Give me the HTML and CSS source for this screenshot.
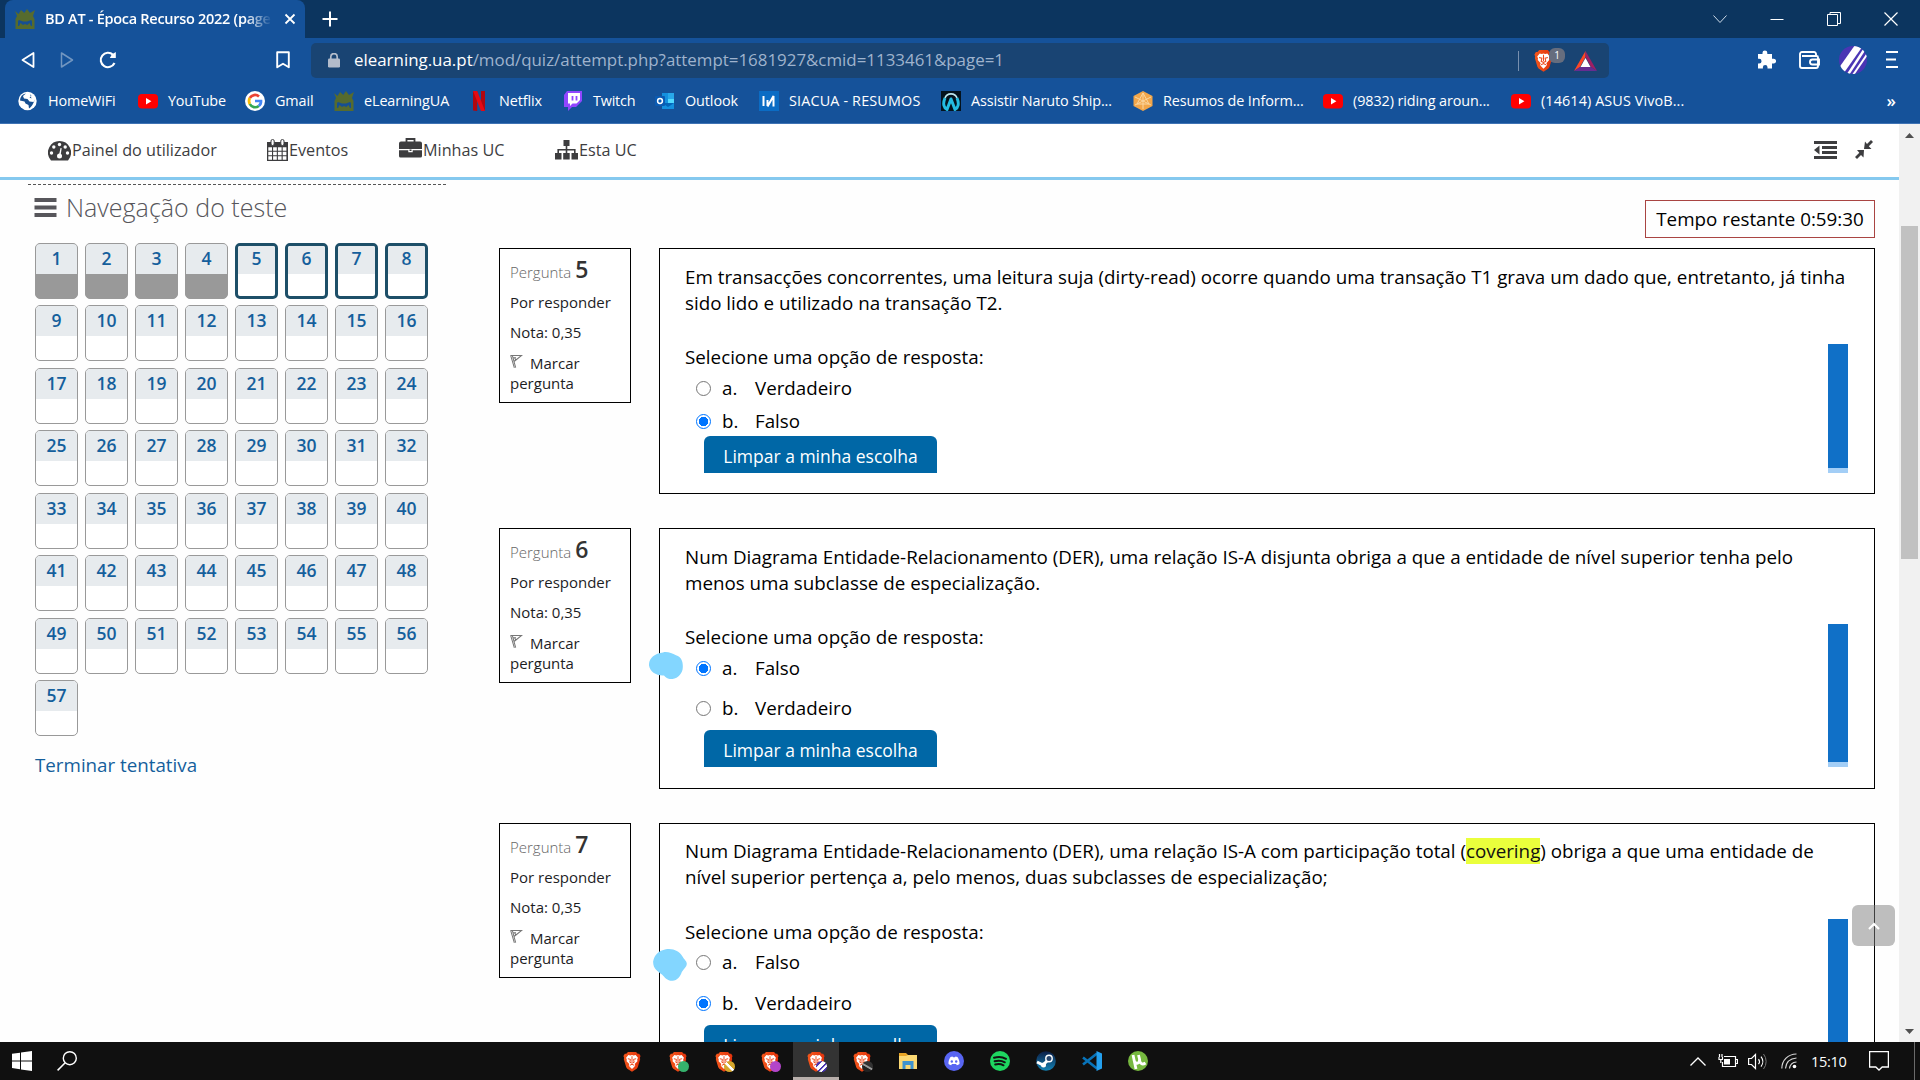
FILE: index.html
```html
<!DOCTYPE html>
<html lang="pt">
<head>
<meta charset="utf-8">
<title>BD AT - Época Recurso 2022 (page 2)</title>
<link rel="stylesheet" href="styles.css">
</head>
<body>
<svg class="defs" width="0" height="0">
  <defs>
    <linearGradient id="braveFill" x1="0" x2="1"><stop offset="0" stop-color="#f4571c"/><stop offset="1" stop-color="#e2330c"/></linearGradient>
    <linearGradient id="blueGreen" x1="0" y1="0" x2="0" y2="1"><stop offset="0" stop-color="#0c1d45"/><stop offset="1" stop-color="#1383b5"/></linearGradient>
    <symbol id="brave" viewBox="0 0 20 24" preserveAspectRatio="none">
      <path fill="url(#braveFill)" d="M5.5 1h9l1.8 2 1.7.1 1.5 2.6-.7 2 .3 1.6-2.7 9.2-1.2 1.9L10 23.7l-5.2-3.3-1.2-1.9L.9 9.3l.3-1.6-.7-2L2 3.1 3.7 3z"/>
      <path fill="#fff" d="M6 4.6l2.2.5 1.8-.5 1.8.5 2.2-.5 2.6 3.2-.8 1.8.2 2-3 3.2.6 1.7-.8 1.2L10 20.6l-2.8-2.9-.8-1.2.6-1.7-3-3.2.2-2-.8-1.8z"/>
      <path fill="none" stroke="#ee481b" stroke-width="1.1" d="M5.4 8.8l2.9.8-.7 3.3 2.4 1 2.4-1-.7-3.3 2.9-.8M10 6v6.5M7.500 16.400l2.500-1.200 2.500 1.200"/>
    </symbol>
    <symbol id="youtube" viewBox="0 0 20 20"><rect y="3" width="20" height="14.5" rx="4" fill="#f00"/><path fill="#fff" d="M8 7l5.400 3.200L8 13.400z"/></symbol>
    <symbol id="ua" viewBox="0 0 20 20"><path fill="#566b2e" d="M0 2l3.500 3L6 1l3.300 3L12 0l3 4 5-3-2 6 1.500 3v10H.5V10L2 7z"/><path fill="#164f92" d="M4 11l4 1.500h4L16 11l1 1v5H3v-5z"/><path fill="#566b2e" d="M4 17l1.500-3L8 16l2-1 2.200 1 2.300-2 1.500 3z"/></symbol>
    <symbol id="flag" viewBox="0 0 14 16"><path fill="none" stroke="#777" stroke-width="1.1" d="M.7 1.500l4 13.300M2.500 1.500l3.600 13M.5 1.500h12L4.400 8M5 4l1.200 2.500M3.500 4h3"/></symbol>
    <symbol id="blobA" viewBox="0 0 34 27"><path fill="#83d6ff" d="M14 .5C18-.8 23 1.500 27 3.200c6 2 7 7 6.800 12-.1 6-4.500 10.800-10.300 11.800-4 .5-6.500-1-8.500-3.500C7 24 1 19.500 0 13.500-.5 7 5 1.500 14 .5z"/></symbol>
    <symbol id="blobB" viewBox="0 0 34 32"><path fill="#83d6ff" d="M12 .5C20-1 26 2 29.500 7.500c1.500 3 4.500 4.500 4.300 7.500 0 2.500-3 5-5 8-1.500 4.500-4.500 8.600-9.300 8.800-5 .2-8-3.600-10.500-6.300C5 22.500 0 20 .1 12.500 1.500 6 5 2 12 .5z"/></symbol>
  </defs>
</svg>

<header class="titlebar">
  <div class="tab">
    <svg class="i20"><use href="#ua"/></svg>
    <span class="tab-title">BD AT - Época Recurso 2022 (page</span>
    <svg class="tab-x" viewBox="0 0 12 12"><path d="M1.500 1.500l9 9m0-9l-9 9" stroke="#fff" stroke-width="1.800"/></svg>
  </div>
  <svg class="tab-plus" viewBox="0 0 16 16"><path d="M8 .5v15M.5 8h15" stroke="#fff" stroke-width="2"/></svg>
  <div class="win-buttons">
    <svg width="14" height="14" viewBox="0 0 14 14"><path d="M.5 3.500L7 10.500l6.500-7" fill="none" stroke="#cfdbe8"/></svg>
    <svg width="14" height="14" viewBox="0 0 14 14"><path d="M.5 7.500h13" stroke="#fff"/></svg>
    <svg width="14" height="14" viewBox="0 0 14 14"><path d="M.5 2.500h10v11H.5zM3 2.500v-2h10.500v11h-3" fill="none" stroke="#fff"/></svg>
    <svg width="14" height="14" viewBox="0 0 14 14"><path d="M.5.5l13 13m0-13l-13 13" stroke="#fff" stroke-width="1.200"/></svg>
  </div>
</header>

<div class="toolbar">
  <div class="nav-buttons">
    <svg width="14" height="18" viewBox="0 0 14 18"><path d="M12.500 2v14L1.500 9z" fill="none" stroke="#fff" stroke-width="1.800" stroke-linejoin="round"/></svg>
    <svg width="14" height="18" viewBox="0 0 14 18"><path d="M1.500 2v14l11-7z" fill="none" stroke="#7296c0" stroke-width="1.500" stroke-linejoin="round"/></svg>
    <svg width="18" height="18" viewBox="0 0 18 18"><path d="M15.500 12A7.200 7.200 0 1 1 14 3.800" fill="none" stroke="#fff" stroke-width="2.100"/><path d="M16.800 1v6h-6l2-3.500z" fill="#fff"/></svg>
  </div>
  <svg class="bookmark" viewBox="0 0 14 18"><path d="M1.200 1.200h11.600v15L7 12.800l-5.800 3.400z" fill="none" stroke="#fff" stroke-width="1.900" stroke-linejoin="round"/></svg>
  <div class="url">
    <svg class="lock" viewBox="0 0 12 15"><rect y="5.500" width="12" height="9" rx="1.200" fill="#b3bccb"/><path d="M2.800 6V3.800a3.200 3.200 0 0 1 6.400 0V6" fill="none" stroke="#b3bccb" stroke-width="1.700"/></svg>
    <span class="url-text"><b>elearning.ua.pt</b>/mod/quiz/attempt.php?attempt=1681927&amp;cmid=1133461&amp;page=1</span>
    <span class="url-sep"></span>
    <span class="shield"><svg width="19" height="23"><use href="#brave"/></svg><i>1</i></span>
    <svg width="23" height="20" viewBox="0 0 23 20"><path fill="#ff4724" d="M11.500 0v6L6 16l-6 4z"/><path fill="#9e1f63" d="M11.500 0L23 20l-6-4-5.500-10z"/><path fill="#662d91" d="M0 20h23l-6-4H6z"/><path fill="#fff" d="M11.500 7l5 9h-10z"/></svg>
  </div>
  <div class="tools">
    <svg width="18" height="19" viewBox="0 0 18 19"><path fill="#fff" d="M0 4h4.500V2.800a2.400 2.400 0 0 1 4.800 0V4H14v4.800h1.700a2.300 2.300 0 0 1 0 4.700H14v5H9.500v-1.200a2.300 2.300 0 0 0-4.600 0v1.200H0v-5h1.200a2.300 2.300 0 0 0 0-4.700H0z"/></svg>
    <svg width="21" height="18" viewBox="0 0 21 18"><path d="M17 5V3a2 2 0 0 0-2-2H3a2 2 0 0 0-2 2v12a2 2 0 0 0 2 2h14a2 2 0 0 0 2-2V6.500A1.500 1.500 0 0 0 17.500 5H3M20 8.500h-6.500a2.300 2.300 0 0 0 0 5H20z" fill="none" stroke="#fff" stroke-width="1.900"/></svg>
    <svg width="28" height="28" viewBox="0 0 28 28"><defs><clipPath id="avatar"><circle cx="14" cy="14" r="14"/></clipPath></defs><g clip-path="url(#avatar)"><path fill="#4a35b4" d="M0 0h28v28H0z"/><path d="M21-2L2 25" stroke="#fff" stroke-width="7"/><path d="M27 1L8 30" stroke="#fff" stroke-width="2.500"/><path d="M31 4L12 32" stroke="#fff" stroke-width="2"/></g></svg>
    <svg width="12" height="17" viewBox="0 0 12 17"><path d="M0 1h12M0 8.500h10M0 16h12" stroke="#fff" stroke-width="2"/></svg>
  </div>
</div>

<nav class="bookmarks">
  <a class="bm b1"><svg class="i20" viewBox="0 0 20 20"><circle cx="9.500" cy="10" r="9.200" fill="#fff"/><path fill="#174f91" d="M8 2.500L5 5l1 2.500 3.500.5 2 2.500 4 .5 1.800-3C16 10 15 15 11 17.500L10.500 14l-3-1.500-1-2L2 9.500A7.500 7.500 0 0 1 8 2.500zM12 3l1.500 2-2 1.500 2 1"/></svg>HomeWiFi</a>
  <a class="bm b2"><svg class="i20"><use href="#youtube"/></svg>YouTube</a>
  <a class="bm b3"><svg class="i20" viewBox="0 0 20 20"><circle cx="10" cy="10" r="10" fill="#fff"/><g fill="none" stroke-width="2.700"><path stroke="#ea4335" d="M4.800 7A6 6 0 0 1 14 5.500"/><path stroke="#fbbc05" d="M4.800 7a6.300 6.300 0 0 0 0 6"/><path stroke="#34a853" d="M4.800 13a6 6 0 0 0 9 2"/><path stroke="#4285f4" d="M10 10h6a6 6 0 0 1-2.200 5"/></g></svg>Gmail</a>
  <a class="bm b4"><svg class="i20"><use href="#ua"/></svg>eLearningUA</a>
  <a class="bm b5"><svg class="i20" viewBox="0 0 20 20"><path fill="#b1060f" d="M4 0h4.200v20L4 19.500zM12 0h4v19.500l-4 .5z"/><path fill="#e50914" d="M4 0h4.200L16 20h-4z"/></svg>Netflix</a>
  <a class="bm b6"><svg class="i20" viewBox="0 0 20 20"><path fill="#9146ff" d="M4 0L1 4v12h4v4l4-4h4l6-6V0z"/><path fill="#fff" d="M5 2h12v7l-3.500 3.500h-4L7 15v-2.500H5z"/><path stroke="#9146ff" stroke-width="1.800" d="M9.500 5v4.500M13.500 5v4.500"/></svg>Twitch</a>
  <a class="bm b7"><svg class="i20" viewBox="0 0 20 20"><path fill="#1490df" d="M7 2h12v16H7z"/><path fill="#28a8ea" d="M13 2h6v6h-6z"/><path fill="#50d9ff" d="M13 8h6v4h-6z"/><path fill="#0364b8" d="M7 12h12l-6 4z"/><rect y="5" width="10" height="10" rx="1" fill="#0a5bb3"/><circle cx="5" cy="10" r="2.400" fill="none" stroke="#fff" stroke-width="1.500"/></svg>Outlook</a>
  <a class="bm b8"><svg class="i20" viewBox="0 0 20 20"><path fill="#0b6cc4" d="M0 0h20v20H0z"/><path fill="none" stroke="#fff" stroke-width="2" stroke-linejoin="bevel" d="M4.500 5v10M8.500 15.500L14.500 5v10.500M8.500 9v6"/></svg>SIACUA - RESUMOS</a>
  <a class="bm b9"><svg class="i20" viewBox="0 0 20 20"><path fill="#04131e" d="M0 0h20v20H0z"/><path fill="none" stroke="#bde6ee" stroke-width="1.700" d="M4 7a6.300 6 0 0 1 12 0"/><path fill="none" stroke="#24bde2" stroke-width="3" stroke-linejoin="round" d="M4 7C1.500 13 3 17 6 18.500L10 8l4 10.500c3-1.500 4.500-5.500 2-11.500"/></svg>Assistir Naruto Ship...</a>
  <a class="bm b10"><svg class="i20" viewBox="0 0 20 20"><path fill="#f2a64a" d="M10 0l9.500 5v10L10 20 .5 15V5z"/><path fill="none" stroke="#fbd6a0" d="M10 2v16M2 6l16 8M18 6L2 14M10 2L4 13h12z"/></svg>Resumos de Inform...</a>
  <a class="bm b11"><svg class="i20"><use href="#youtube"/></svg>(9832) riding aroun...</a>
  <a class="bm b12"><svg class="i20"><use href="#youtube"/></svg>(14614) ASUS VivoB...</a>
  <span class="more">»</span>
</nav>

<div class="viewport">
  <div class="page">
    <div class="site-nav">
      <a class="n1"><svg width="23" height="20" viewBox="0 0 23 20"><path fill="#3d3d3f" d="M11.500 0A11.500 11.500 0 0 0 2 18l1 1.500h17l1-1.500A11.500 11.500 0 0 0 11.500 0z"/><g fill="#fff"><circle cx="3.500" cy="12" r="1.700"/><circle cx="5.800" cy="6" r="1.700"/><circle cx="11.500" cy="3.500" r="1.700"/><circle cx="17.200" cy="6" r="1.700"/><circle cx="19.500" cy="12" r="1.700"/><circle cx="11.500" cy="15" r="2.500"/><path d="M11 14l1.500-7 1.200.3L12.500 15z"/></g></svg>Painel do utilizador</a>
      <a class="n2"><svg width="21" height="22" viewBox="0 0 21 22"><path fill="#3d3d3f" d="M0 3h21v19H0z"/><path stroke="#fff" stroke-width="3.400" stroke-dasharray="3.700 1.100" d="M1.300 10h18.500M1.300 14.500h18.500M1.300 19h18.500"/><rect x="4" y=".5" width="3.200" height="6" rx="1.500" fill="#fff" stroke="#3d3d3f"/><rect x="13.800" y=".5" width="3.200" height="6" rx="1.500" fill="#fff" stroke="#3d3d3f"/></svg>Eventos</a>
      <a class="n3"><svg width="23" height="20" viewBox="0 0 23 20"><path fill="none" stroke="#3d3d3f" stroke-width="1.800" d="M7.500 4V1h8v3"/><path fill="#3d3d3f" d="M2 3.500h19a2 2 0 0 1 2 2V11H0V5.500a2 2 0 0 1 2-2zM0 12.200h9.300v2h4.400v-2H23V18a1.500 1.500 0 0 1-1.500 1.500h-20A1.500 1.500 0 0 1 0 18zM10.500 11.500h2v1.500h-2z"/></svg>Minhas UC</a>
      <a class="n4"><svg width="23" height="20" viewBox="0 0 23 20"><path fill="#3d3d3f" d="M8.500 0h6v6h-6zM0 13h6.500v6.500H0zM8.200 13h6.500v6.500H8.200zM16.500 13H23v6.500h-6.500z"/><path fill="none" stroke="#3d3d3f" stroke-width="1.600" d="M11.500 5v9M3.200 14V9.800h16.600V14"/></svg>Esta UC</a>
      <div class="site-actions">
        <svg width="23" height="18" viewBox="0 0 23 18"><path stroke="#3d3d3f" stroke-width="3" d="M0 1.500h23M8 6.500h15M8 11.500h15M0 16.500h23"/><path fill="#3d3d3f" d="M5.500 4.500v9L0 9z"/></svg>
        <svg width="18" height="19" viewBox="0 0 18 19"><path fill="#3d3d3f" d="M10 1.500L12 4l4-4 2 2-4.200 4.300L16.500 9H9zM8.500 17.500L6 15l-4 4-2-2 4.300-4.300L2 10h7z"/></svg>
      </div>
    </div>

    <main class="columns">
      <aside class="quiz-nav">
        <h2><svg width="23" height="19" viewBox="0 0 23 19"><path stroke="#57565b" stroke-width="4" d="M.5 2h22M.5 9.500h22M.5 17h22"/></svg>Navegação do teste</h2>
        <div class="cells" id="cells"></div>
        <a class="finish">Terminar tentativa</a>
      </aside>

      <section class="questions">
        <div class="timer">Tempo restante 0:59:30</div>

        <article class="question q5">
          <div class="info">
            <h3>Pergunta <b>5</b></h3><p>Por responder</p><p>Nota: 0,35</p>
            <p class="mark"><svg width="13" height="15"><use href="#flag"/></svg>Marcar<br>pergunta</p>
          </div>
          <div class="content">
            <p class="qtext">Em transacções concorrentes, uma leitura suja (dirty-read) ocorre quando uma transação T1 grava um dado que, entretanto, já tinha<br>sido lido e utilizado na transação T2.</p>
            <div class="answer">
              <div class="choices">
                <p class="prompt">Selecione uma opção de resposta:</p>
                <label class="opt"><i class="radio"></i><span>a.</span>Verdadeiro</label>
                <label class="opt"><i class="radio on"></i><span>b.</span>Falso</label>
                <button class="clear">Limpar a minha escolha</button>
              </div>
              <div class="bar"></div>
            </div>
          </div>
        </article>

        <article class="question spaced q6">
          <div class="info">
            <h3>Pergunta <b>6</b></h3><p>Por responder</p><p>Nota: 0,35</p>
            <p class="mark"><svg width="13" height="15"><use href="#flag"/></svg>Marcar<br>pergunta</p>
          </div>
          <div class="content">
            <svg class="blob blob-a"><use href="#blobA"/></svg>
            <p class="qtext">Num Diagrama Entidade-Relacionamento (DER), uma relação IS-A disjunta obriga a que a entidade de nível superior tenha pelo<br>menos uma subclasse de especialização.</p>
            <div class="answer">
              <div class="choices">
                <p class="prompt">Selecione uma opção de resposta:</p>
                <label class="opt"><i class="radio on"></i><span>a.</span>Falso</label>
                <label class="opt"><i class="radio"></i><span>b.</span>Verdadeiro</label>
                <button class="clear">Limpar a minha escolha</button>
              </div>
              <div class="bar"></div>
            </div>
          </div>
        </article>

        <article class="question spaced q7">
          <div class="info">
            <h3>Pergunta <b>7</b></h3><p>Por responder</p><p>Nota: 0,35</p>
            <p class="mark"><svg width="13" height="15"><use href="#flag"/></svg>Marcar<br>pergunta</p>
          </div>
          <div class="content">
            <svg class="blob blob-b"><use href="#blobB"/></svg>
            <p class="qtext">Num Diagrama Entidade-Relacionamento (DER), uma relação IS-A com participação total (<mark>covering</mark>) obriga a que uma entidade de<br>nível superior pertença a, pelo menos, duas subclasses de especialização;</p>
            <div class="answer">
              <div class="choices">
                <p class="prompt">Selecione uma opção de resposta:</p>
                <label class="opt"><i class="radio"></i><span>a.</span>Falso</label>
                <label class="opt"><i class="radio on"></i><span>b.</span>Verdadeiro</label>
                <button class="clear">Limpar a minha escolha</button>
              </div>
              <div class="bar"></div>
            </div>
          </div>
        </article>
      </section>
    </main>
    <a class="to-top"><svg width="12" height="8" viewBox="0 0 12 8"><path d="M1 7l5-5 5 5" fill="none" stroke="#fff" stroke-width="2.200"/></svg></a>
  </div>
  <div class="scrollbar">
    <svg width="9" height="5" viewBox="0 0 9 5"><path fill="#505050" d="M4.500 0L9 5H0z"/></svg>
    <div class="thumb"></div>
    <svg width="9" height="5" viewBox="0 0 9 5"><path fill="#505050" d="M0 0h9L4.500 5z"/></svg>
  </div>
</div>

<footer class="taskbar">
  <svg class="start" width="20" height="20" viewBox="0 0 20 20"><path fill="#fff" d="M0 2.800l8-1.100v7.700H0zM9 1.500L20 0v9.400H9zM0 10.500h8v7.700l-8-1.100zM9 10.500h11V20L9 18.400z"/></svg>
  <svg class="search" width="20" height="20" viewBox="0 0 20 20"><circle cx="12.800" cy="7.200" r="6.500" fill="none" stroke="#fff" stroke-width="1.400"/><path d="M8.200 11.800L.6 19.400" stroke="#fff" stroke-width="1.500"/></svg>
  <div class="apps">
    <span><svg width="18" height="21"><use href="#brave"/></svg></span>
    <span class="prof green"><svg width="18" height="21"><use href="#brave"/></svg><i></i></span>
    <span class="prof gold"><svg width="18" height="21"><use href="#brave"/></svg><i></i></span>
    <span class="prof pink"><svg width="18" height="21"><use href="#brave"/></svg><i></i></span>
    <span class="prof violet active"><svg width="18" height="21"><use href="#brave"/></svg><i></i></span>
    <span class="prof dark"><svg width="18" height="21"><use href="#brave"/></svg><i></i></span>
    <span><svg width="18" height="18" viewBox="0 0 18 18"><path fill="#e8a526" d="M0 1h7l2 2v4H0z"/><path fill="#fbd873" d="M0 4h7l2-1h9v14H0z"/><path fill="#3f93cf" d="M3.500 17v-8h11v8h-3v-4h-5v4z"/></svg></span>
    <span><svg width="20" height="20" viewBox="0 0 20 20"><circle cx="10" cy="10" r="10" fill="#5865f2"/><path fill="#fff" d="M6.500 6l2-.6.5.8h2l.5-.8 2 .6c1.500 2.200 2.200 4.500 2 7-.8.700-1.700 1.100-2.700 1.300l-.7-1.200H7.900l-.7 1.200c-1-.2-1.900-.6-2.700-1.300-.2-2.500.5-4.800 2-7z"/><circle cx="7.800" cy="10.500" r="1.200" fill="#5865f2"/><circle cx="12.200" cy="10.500" r="1.200" fill="#5865f2"/></svg></span>
    <span><svg width="20" height="20" viewBox="0 0 20 20"><circle cx="10" cy="10" r="10" fill="#1ed760"/><path fill="none" stroke="#121212" stroke-linecap="round" stroke-width="2" d="M4 6.800c4-1.300 8.500-1 12 1M4.600 10.300c3.600-1 7-.8 10.200 1M5.200 13.500c3-.8 5.800-.6 8.300.8"/></svg></span>
    <span><svg width="20" height="20" viewBox="0 0 20 20"><circle cx="10" cy="10" r="9.800" fill="url(#blueGreen)"/><path stroke="#fff" stroke-width="3" fill="none" d="M1 11l6 3 6-6"/><circle cx="13" cy="7.500" r="3.200" fill="#25446c" stroke="#fff" stroke-width="1.400"/><circle cx="7.500" cy="14" r="2.500" fill="#fff"/></svg></span>
    <span><svg width="20" height="20" viewBox="0 0 20 20"><path fill="none" stroke="#0873b9" stroke-width="2.600" d="M1 6.500L15 17.500M1 13.500L15 2.500"/><path fill="#24a0ee" d="M14.500 0L20 2.500v15L14.500 20z"/></svg></span>
    <span><svg width="20" height="20" viewBox="0 0 20 20"><circle cx="10" cy="10" r="10" fill="#76b83f"/><path fill="none" stroke="#fff" stroke-width="2.800" d="M5 4l3 14M6 9c.8 4.500 6 4.500 5.500-1L10.500 4M11.500 9c.5 4 3 5 6 3"/></svg></span>
  </div>
  <div class="tray">
    <svg width="16" height="9" viewBox="0 0 16 9"><path d="M.5 8.500L8 1l7.500 7.500" fill="none" stroke="#fff" stroke-width="1.300"/></svg>
    <svg width="20" height="14" viewBox="0 0 20 14"><path d="M6 2.500h11.500v10h-13V8M18 5.500h1.500v4H18M1 3v2.500h3.500V3M1.500 0v3M4 0v3M2.800 5.500V9" fill="none" stroke="#fff" stroke-width="1.200"/><path fill="#fff" d="M6 5h6v5.500H6z"/></svg>
    <svg width="20" height="17" viewBox="0 0 20 17"><path d="M.6 5.500h2.900l4-4v14l-4-4H.6z" fill="none" stroke="#fff" stroke-width="1.200"/><path d="M10.500 6a4 4 0 0 1 0 5M13 3.500a8 8 0 0 1 0 10" fill="none" stroke="#fff" stroke-width="1.200"/><path d="M15.500 1a12 12 0 0 1 0 15" fill="none" stroke="#777"/></svg>
    <svg width="16" height="16" viewBox="0 0 16 16"><path d="M.8 15.500C1 7 7 1.200 15.500 1M4.500 15.500c.5-6 4.500-10 11-10.500M8.500 15.500c.5-4 2.800-6.200 7-6.500" fill="none" stroke="#d5d5d5" stroke-width="1.200"/><circle cx="13.500" cy="13.500" r="1.800" fill="#fff"/></svg>
    <time>15:10</time>
    <svg width="20" height="20" viewBox="0 0 20 20"><path d="M.6.600h18.800v15.400h-6.200l-3.200 3-3.200-3H.6z" fill="none" stroke="#fff" stroke-width="1.300"/></svg>
    <span class="desk"></span>
  </div>
</footer>
<script>
  const cells = document.getElementById('cells');
  for (let n = 1; n <= 57; n++) {
    const cell = document.createElement('a');
    cell.className = 'cell' + (n < 5 ? ' done' : n < 9 ? ' current' : '');
    cell.innerHTML = '<span>' + n + '</span>';
    cells.append(cell);
  }
</script>
</body>
</html>
```
FILE: styles.css
```css
* { box-sizing: border-box; }
body {
  margin: 0; width: 1920px; height: 1080px; overflow: hidden;
  display: flex; flex-direction: column;
  font-family: "Open Sans", "Noto Sans", sans-serif; background: #fff; color: #000;
}
h2, h3, p { margin: 0; font-weight: 400; }
svg { display: block; flex: none; }
.defs { position: absolute; }
.i20 { width: 20px; height: 20px; }

.titlebar { flex: none; height: 38px; background: #0c355f; display: flex; align-items: center; padding-left: 5px; color: #fff; }
.tab { width: 300px; height: 38px; background: #15529a; border-radius: 8px 8px 0 0; display: flex; align-items: center; padding-left: 10px; }
.tab-title {
  margin-left: 10px; width: 230px; overflow: hidden; white-space: nowrap; padding-bottom: 2px;
  font-size: 14.500px; font-weight: 600; letter-spacing: -.28px;
  -webkit-mask-image: linear-gradient(90deg, #000 200px, transparent 227px);
}
.tab-x { width: 12px; height: 12px; margin-left: 9px; }
.tab-plus { width: 16px; height: 16px; margin-left: 17px; }
.win-buttons { margin-left: auto; display: flex; gap: 43px; padding-right: 22px; }

.toolbar { flex: none; height: 43px; background: #15529a; display: flex; align-items: center; }
.nav-buttons { display: flex; align-items: center; gap: 25px; width: 276px; padding-left: 21px; }
.bookmark { width: 14px; height: 18px; }
.url { margin-left: 21px; margin-top: 2px; width: 1298px; height: 35px; background: #194473; border-radius: 5px; display: flex; align-items: center; padding-left: 17px; color: #9fb3cd; }
.lock { width: 12px; height: 15px; }
.url-text { margin-left: 14px; padding-bottom: 2px; font-size: 16.900px; white-space: nowrap; width: 1164px; }
.url-text b { font-weight: 400; color: #fff; }
.url-sep { width: 1px; height: 20px; background: #7890af; }
.shield { display: flex; width: 55px; padding-left: 15px; position: relative; }
.shield i { position: absolute; left: 30px; top: -1px; width: 16px; height: 15px; border-radius: 6px; background: #666d7e; color: #fff; font: 10px/15px "Open Sans", sans-serif; text-align: center; }
.tools { margin-left: auto; display: flex; align-items: center; padding-right: 22px; gap: 19px; }
.tools svg:nth-child(1) { margin-right: 4px; }

.bookmarks { flex: none; height: 43px; background: #15529a; border-bottom: 1px solid #3f73b4; display: flex; align-items: center; padding: 0 0 3px 18px; color: #fff; font-size: 14.400px; line-height: 18px; }
.bm { display: flex; align-items: center; gap: 10px; white-space: nowrap; letter-spacing: -.1px; flex: none; }
.b1 { width: 120px; letter-spacing: -.15px; } .b2 { width: 107px; letter-spacing: -.2px; } .b3 { width: 89px; } .b4 { width: 135px; }
.b5 { width: 94px; } .b6 { width: 92px; letter-spacing: -.2px; } .b7 { width: 104px; } .b8 { width: 182px; letter-spacing: .15px; }
.b9 { width: 192px; } .b10 { width: 190px; } .b11 { width: 188px; } .b12 { width: 180px; letter-spacing: .1px; }
.more { margin-left: auto; padding-right: 24px; font-size: 17px; font-weight: 600; }

.viewport { flex: none; height: 918px; display: flex; overflow: hidden; }
.page { position: relative; width: 1899px; overflow: hidden; background: #fefefe; }
.scrollbar { width: 21px; background: #f1f1f1; display: flex; flex-direction: column; align-items: center; padding: 9px 0 8px; }
.thumb { width: 17px; height: 333px; margin-top: 88px; margin-bottom: auto; background: #c1c1c1; }

.site-nav { height: 56px; border-bottom: 3px solid #85c9ef; background: #fff; display: flex; align-items: center; padding: 0 26px 2px 48px; font-size: 16.200px; color: #3d3d3f; }
.site-nav a { display: flex; align-items: center; gap: 1px; white-space: nowrap; }
.site-nav .n1 svg { margin-top: 2px; }
.n1 { width: 219px; } .n2 { width: 132px; } .n3 { width: 156px; }
.site-nav .n3 svg { margin-top: -3px; }
.site-actions { margin-left: auto; display: flex; align-items: center; gap: 18px; }

.columns { display: flex; }
.quiz-nav { width: 418px; margin-left: 28px; margin-top: 4px; border-top: 1px dashed #555; padding: 2px 0 0 6px; flex: none; }
.quiz-nav h2 { display: flex; align-items: center; gap: 9px; height: 40px; font-size: 25.050px; font-weight: 300; color: #57565b; }
.cells { display: grid; grid-template-columns: repeat(8, 43px); column-gap: 7px; grid-auto-rows: 56px; row-gap: 6.430px; margin: 16px 0 0 1px; }
.cell { border: 1px solid #999; border-radius: 5px; overflow: hidden; background: #fff; text-align: center; font-size: 17.500px; font-weight: 600; color: #155f9c; }
.cell span { display: block; height: 30px; line-height: 29px; background: #e7ebee; }
.done { background: #999; }
.current { border: 3px solid #1d4f68; }
.current span { height: 28px; line-height: 25px; }
.finish { display: block; margin: 16px 0 0 1px; font-size: 18.750px; line-height: 26px; color: #155f9c; }

.questions { margin-left: 53px; width: 1376px; padding-top: 20px; }
.timer { margin-left: auto; width: 230px; height: 38px; border: 1px solid #a94442; font-size: 18.800px; line-height: 36px; text-align: center; white-space: nowrap; }
.question { display: flex; align-items: flex-start; gap: 28px; }
.q5 { margin-top: 10px; height: 280px; }
.q6 { height: 295px; }
.info { width: 132px; height: 155px; border: 1px solid #000; background: #fff; padding: 5px 10px; font-size: 15px; color: #1d1d1f; white-space: nowrap; }
.info h3 { font-size: 15px; font-weight: 300; line-height: 30px; height: 36px; color: #666; }
.info h3 b { font-size: 23px; font-weight: 600; color: #333; }
.info p { line-height: 20px; margin-top: 2px; height: 28px; }
.info p.mark { margin-top: 3px; height: 40px; }
.mark svg { display: inline-block; margin-right: 7px; vertical-align: 0; }
.content { position: relative; width: 1216px; border: 1px solid #000; background: #fff; padding: 15px 26px 0 25px; font-size: 18.800px; line-height: 26px; height: 246px; white-space: nowrap; }
.q6 .content { height: 261px; }
.q7 .content { height: 300px; padding-top: 14px; }
.qtext { height: 80px; }
.q7 .qtext { height: 81px; }
mark { background: #eaff3c; color: #111; }
.answer { display: flex; justify-content: space-between; height: 129px; }
.spaced .answer { height: 143px; }
.opt { display: flex; align-items: center; margin: 5px 0 0 11px; height: 26px; font-size: 18.750px; }
.opt + .opt { margin-top: 7px; }
.opt span { width: 33px; }
.radio { width: 15px; height: 15px; margin-right: 11px; border: 1px solid #767676; border-radius: 50%; }
.radio.on { border: 1.500px solid #0075ff; background: radial-gradient(circle, #0075ff 4.500px, #fff 5px); }
.clear { display: block; margin: 2px 0 0 19px; width: 233px; height: 37px; border: 0; padding: 3px 0 0; border-radius: 6px 6px 0 0; background: #0067a6; color: #fff; font: 17.500px "Open Sans", sans-serif; }
.spaced .opt { margin-top: 5px; }
.spaced .opt + .opt { margin-top: 14px; }
.q7 .opt { margin-top: 4px; }
.q7 .opt + .opt { margin-top: 15px; }
.spaced .clear { margin-top: 9px; }
.bar { width: 20px; background: #1070c7; border-bottom: 5px solid #a3cef6; }
.blob { position: absolute; width: 34px; }
.blob-a { left: -11px; top: 123px; height: 27px; }
.blob-b { left: -7px; top: 125px; height: 32px; }
.to-top { position: absolute; left: 1852px; top: 781px; width: 43px; height: 41px; border-radius: 6px; background: rgba(125,125,125,.5); display: flex; align-items: center; justify-content: center; }

.taskbar { flex: none; height: 38px; background: #101010; display: flex; align-items: center; color: #fff; padding-left: 12px; }
.search { margin-left: 25px; }
.apps { display: flex; margin-left: 532px; }
.apps span { position: relative; width: 46px; height: 38px; display: flex; align-items: center; justify-content: center; }
.apps .active { background: #333; border-bottom: 3px solid #b8afab; padding-top: 3px; }
.prof i { position: absolute; left: 23px; top: 19px; width: 11px; height: 11px; border-radius: 50%; }
.green i { background: #35b16c; }
.gold i { background: linear-gradient(45deg, #d5a62c 40%, #fff 42% 55%, #d5a62c 57%); }
.pink i { background: #b345c9; }
.violet i { background: linear-gradient(135deg, #4a35b4 30%, #fff 32% 50%, #4a35b4 52% 62%, #fff 64% 74%, #4a35b4 76%); }
.dark i { background: linear-gradient(30deg, #222 40%, #999 45% 52%, #333 58%); }
.tray { margin-left: auto; display: flex; align-items: center; height: 38px; }
.tray svg:nth-child(2) { margin-left: 12px; }
.tray svg:nth-child(3) { margin-left: 10px; }
.tray svg:nth-child(4) { margin-left: 13px; }
time { font-size: 14.500px; width: 35px; margin: 0 23px 0 14px; letter-spacing: -.3px; }
.desk { width: 1px; height: 38px; background: #6a6a6a; margin: 0 5px 0 25px; }
```
